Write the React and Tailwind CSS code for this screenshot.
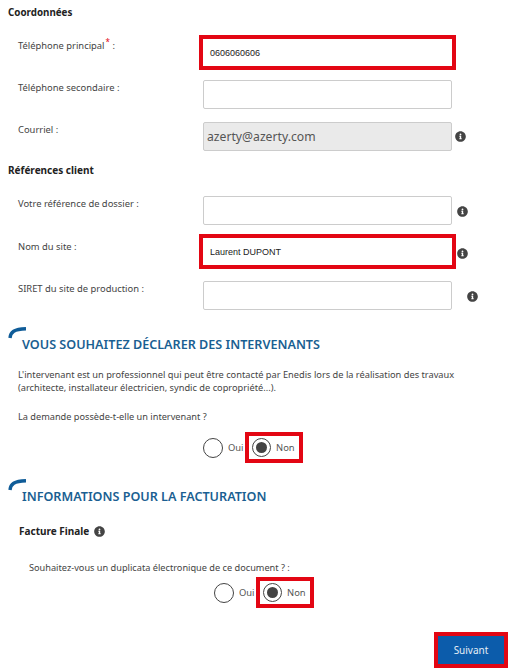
import { FaInfoCircle } from 'react-icons/fa';

function Info({ className = '' }) {
  return <FaInfoCircle size={11} className={`shrink-0 text-[#444] ${className}`} />;
}

function Arc() {
  return (
    <svg width="18" height="12" viewBox="0 0 18 12" className="block">
      <path d="M2 11 C2.5 5 6 2.2 18 1.8" fill="none" stroke="#0f5c98" strokeWidth="3.4" />
    </svg>
  );
}

function Row({ label, labelClass = 'pt-[1px]', className = '', children }) {
  return (
    <div className={`flex items-start ${className}`}>
      <div className={`w-[199px] shrink-0 pl-[18px] text-[#444] ${labelClass}`}>{label}</div>
      {children}
    </div>
  );
}

function Field({ grey, value }) {
  return (
    <div className={`ml-1 flex h-[29px] w-[249px] shrink-0 items-center rounded-[2px] border border-[#ccc] px-[3px] text-[12.2px] text-[#555] ${grey ? 'bg-[#eaeaea]' : 'bg-white'}`}>
      {value}
    </div>
  );
}

function RedField({ value }) {
  return (
    <div className="flex h-[35px] w-[257px] shrink-0 items-center border-4 border-[#e30613] bg-white pl-[7px] font-['Liberation_Sans',sans-serif] text-[9px] text-[#222]">
      {value}
    </div>
  );
}

function Heading({ children, className = '' }) {
  return (
    <div className={className}>
      <Arc />
      <h2 className="-mt-[3px] ml-[14px] text-[12.6px] leading-[17px] font-semibold text-[#1a5f92]">{children}</h2>
    </div>
  );
}

function Radios({ className = '' }) {
  return (
    <div className={`flex items-center ${className}`}>
      <div className="size-[20px] shrink-0 rounded-full border border-[#444] bg-white" />
      <span className="ml-[5px] w-[17px] shrink-0 text-[#555]">Oui</span>
      <div className="flex h-[31px] w-[58px] shrink-0 items-center border-4 border-[#e30613] pl-[3px]">
        <div className="flex size-[19px] shrink-0 items-center justify-center rounded-full border border-[#444] bg-white">
          <div className="size-[11px] rounded-full bg-[#444]" />
        </div>
        <span className="ml-[5px] text-[#555]">Non</span>
      </div>
    </div>
  );
}

export default function App() {
  return (
    <div className="h-[672px] w-[516px] overflow-hidden bg-white font-['Noto_Sans',sans-serif] text-[9.4px] leading-[14px]">
      <div className="pt-[6px] pl-[8px] text-[9.8px] font-bold text-[#222]">Coordonnées</div>

      <Row className="mt-[15px]" labelClass="pt-[4px]" label={<>Téléphone principal<sup className="ml-[1px] text-[8px] text-[#e30613]">*</sup> :</>}>
        <RedField value="0606060606" />
      </Row>
      <Row className="mt-[10px]" label="Téléphone secondaire :">
        <Field />
      </Row>
      <Row className="mt-[13px]" label="Courriel :">
        <Field grey value="azerty@azerty.com" />
        <Info className="mt-[9px] ml-[3px]" />
      </Row>

      <div className="mt-[12px] pl-[8px] text-[10px] font-bold text-[#222]">Références client</div>

      <Row className="mt-[19px]" label="Votre référence de dossier :">
        <Field />
        <Info className="mt-[10px] ml-[5px]" />
      </Row>
      <Row className="mt-[9px]" labelClass="pt-[6px]" label="Nom du site :">
        <RedField value="Laurent DUPONT" />
        <Info className="mt-[14px] ml-[1px]" />
      </Row>
      <Row className="mt-[12px]" label="SIRET du site de production :">
        <Field />
        <Info className="mt-[10px] ml-[15px]" />
      </Row>

      <Heading className="mt-[17px] pl-[8px]">VOUS SOUHAITEZ DÉCLARER DES INTERVENANTS</Heading>
      <p className="mt-[15px] w-[490px] pl-[18px] text-[9.25px] leading-[13px] text-[#444]">
        L'intervenant est un professionnel qui peut être contacté par Enedis lors de la réalisation des travaux<br />
        (architecte, installateur électricien, syndic de copropriété...).
      </p>
      <p className="mt-[16px] pl-[18px] text-[9.2px] text-[#444]">La demande possède-t-elle un intervenant ?</p>
      <Radios className="mt-[8px] ml-[203px]" />

      <Heading className="mt-[16px] pl-[8px]">INFORMATIONS POUR LA FACTURATION</Heading>
      <div className="mt-[19px] flex items-center pl-[19px] text-[10px] font-bold text-[#222]">
        Facture Finale
        <Info className="ml-[5px]" />
      </div>
      <p className="mt-[23px] pl-[29px] text-[9.2px] text-[#444]">Souhaitez-vous un duplicata électronique de ce document ? :</p>
      <Radios className="mt-[2px] ml-[214px]" />

      <div className="mt-[24px] flex justify-end pr-[8px]">
        <div className="border-4 border-[#e30613]">
          <button className="block h-[28px] w-[66px] bg-[#0c5cab] text-center text-[10px] text-[#e6eef6]">Suivant</button>
        </div>
      </div>
    </div>
  );
}
